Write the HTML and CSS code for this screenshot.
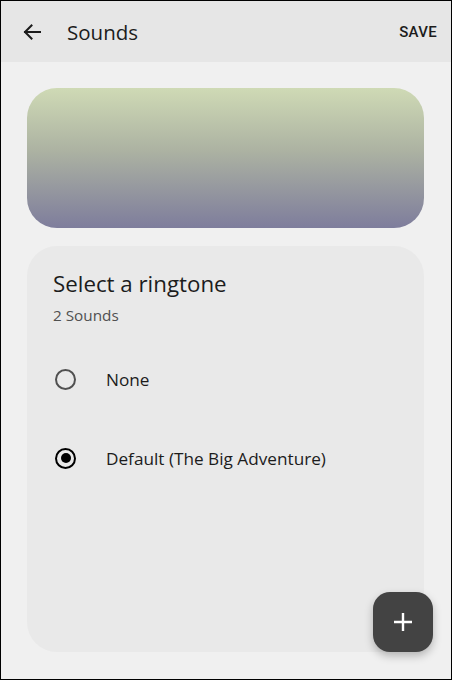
FILE: index.html
```html
<!DOCTYPE html>
<html>
<head>
<meta charset="utf-8">
<link rel="stylesheet" href="styles.css">
</head>
<body>
<div class="frame">
  <header class="appbar">
    <svg class="back" width="24" height="24" viewBox="0 0 24 24"><path d="M20 12H5M11.5 5.5L5 12l6.5 6.5" fill="none" stroke="#1c1c1c" stroke-width="2" stroke-linecap="square"/></svg>
    <div class="title">Sounds</div>
    <div class="save">SAVE</div>
  </header>
  <main class="content">
    <div class="banner"></div>
    <section class="card">
      <h1 class="card-title">Select a ringtone</h1>
      <div class="count">2 Sounds</div>
      <div class="option">
        <span class="radio"></span>
        <span class="label">None</span>
      </div>
      <div class="option">
        <span class="radio checked"></span>
        <span class="label">Default (The Big Adventure)</span>
      </div>
    </section>
    <button class="fab"><svg width="22" height="22" viewBox="0 0 22 22"><path d="M11 2v18M2 11h18" stroke="#fff" stroke-width="2.4"/></svg></button>
  </main>
</div>
</body>
</html>
```
FILE: styles.css
```css
html, body { margin: 0; padding: 0; }
body { font-family: "Open Sans", Roboto, sans-serif; color: #1c1c1c; }
.frame {
  width: 452px; height: 680px; box-sizing: border-box;
  border: 1px solid #000; background: #f0f0f0;
  position: relative; overflow: hidden;
  display: flex; flex-direction: column;
}
.appbar {
  height: 61px; background: #e6e6e6;
  display: flex; align-items: center;
  padding: 0 14px 0 19px;
}
.back { display: block; }
.title { font-size: 20.5px; margin-left: 23px; flex: 1; color: #1c1c1c; }
.save { font-family: Roboto, sans-serif; font-size: 15px; font-weight: 500; letter-spacing: 0.3px; color: #1c1c1c; }
.content { flex: 1; padding: 26px 27px 27px 26px; display: flex; flex-direction: column; gap: 18px; position: relative; }
.banner {
  height: 140px; border-radius: 30px;
  background: linear-gradient(#cfdab5, #acb2a2 45%, #7e7d9c);
}
.card {
  flex: 1; background: #e9e9e9; border-radius: 30px;
  padding: 24px 26px;
}
.card-title { margin: 0; font-size: 22.3px; font-weight: 400; line-height: 28px; color: #1c1c1c; }
.count { font-size: 15.3px; color: #505050; margin-top: 7px; line-height: 20px; }
.option { display: flex; align-items: center; height: 28px; margin-top: 40px; }
.option + .option { margin-top: 51px; }
.radio {
  width: 17px; height: 17px; border: 2px solid #505050; border-radius: 50%;
  margin-left: 2px; margin-right: 30px; position: relative; flex: none;
}
.radio.checked { border-color: #000; }
.radio.checked::after {
  content: ""; position: absolute; left: 3.5px; top: 3.5px; width: 10px; height: 10px;
  border-radius: 50%; background: #000;
}
.label { font-size: 17.2px; color: #1c1c1c; }
.fab {
  position: absolute; right: 18px; bottom: 27px;
  width: 60px; height: 60px; border-radius: 17px; border: none;
  background: #434343; display: flex; align-items: center; justify-content: center;
  box-shadow: 0 4px 8px rgba(0,0,0,0.25); padding: 0;
}
.fab svg { display: block; }
```
